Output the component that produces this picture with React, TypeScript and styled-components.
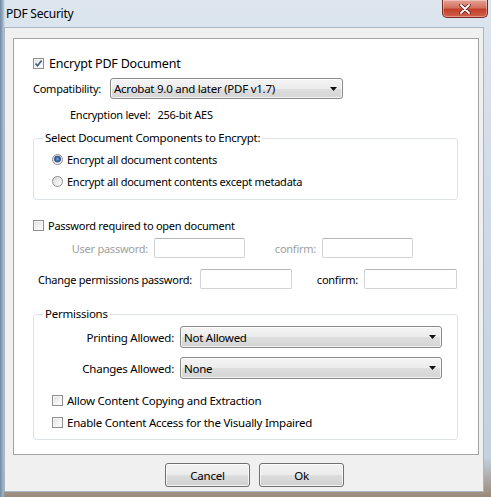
import styled, { createGlobalStyle } from "styled-components";

const GlobalStyle = createGlobalStyle`
  html, body {
    margin: 0;
    padding: 0;
  }
  body {
    font-family: "Noto Sans", "Liberation Sans", sans-serif;
    font-size: 11px;
    letter-spacing: -0.25px;
    color: #000;
  }
  * {
    box-sizing: border-box;
  }
`;

const CheckBox = ({ checked }: { checked?: boolean }) => (
  <Box>
    {checked && (
      <svg width="9" height="9" viewBox="0 0 9 9">
        <path d="M1.5 4.5 L3.6 6.8 L7.6 1.6" fill="none" stroke="#3b5a8f" strokeWidth="1.6" />
      </svg>
    )}
  </Box>
);

const Arrow = () => (
  <svg width="7" height="4" viewBox="0 0 7 4">
    <path d="M0 0 H7 L3.5 4 Z" fill="#111" />
  </svg>
);

const App = () => {
  return (
    <>
      <GlobalStyle />
      <Window>
        <TitleBar>
          <Title>PDF Security</Title>
          <CloseButton>
            <svg width="12" height="10" viewBox="0 0 12 10">
              <path d="M2 1 L10 9 M10 1 L2 9" stroke="#5a1a14" strokeWidth="3.4" strokeLinecap="round" />
              <path d="M2 1 L10 9 M10 1 L2 9" stroke="#fff" strokeWidth="1.8" strokeLinecap="round" />
            </svg>
          </CloseButton>
        </TitleBar>

        <Client>
          <Panel>
            <Row $top={0} $height={20}>
              <CheckBox checked />
              <BigLabel>Encrypt PDF Document</BigLabel>
            </Row>

            <Row $top={5} $height={21}>
              <Label $width={71}>Compatibility:</Label>
              <DropDown $width={233} $height={21}>
                <span>Acrobat 9.0 and later (PDF v1.7)</span>
                <Arrow />
              </DropDown>
            </Row>

            <Row $top={7} $height={16} $indent={37}>
              <span>Encryption level:</span>
              <Value>256-bit AES</Value>
            </Row>

            <Group $top={8} $height={70}>
              <Legend>Select Document Components to Encrypt:</Legend>
              <Row $top={3} $height={20}>
                <Radio $checked />
                <OptionText>Encrypt all document contents</OptionText>
              </Row>
              <Row $top={2} $height={20}>
                <Radio />
                <OptionText>Encrypt all document contents except metadata</OptionText>
              </Row>
            </Group>

            <Row $top={15} $height={20}>
              <CheckBox />
              <OptionText>Password required to open document</OptionText>
            </Row>

            <Row $top={3} $height={20}>
              <Label $width={115} $right $muted>User password:</Label>
              <TextField $width={91} />
              <Label $width={71} $right $muted>confirm:</Label>
              <TextField $width={91} />
            </Row>

            <Row $top={11} $height={20} $indent={5}>
              <Label $width={156}>Change permissions password:</Label>
              <TextField $width={92} />
              <Label $width={66} $right>confirm:</Label>
              <TextField $width={93} />
            </Row>

            <Group $top={17} $height={134}>
              <Legend>Permissions</Legend>
              <Row $top={4} $height={22}>
                <Label $width={122} $right $big>Printing Allowed:</Label>
                <DropDown $width={262} $height={22}>
                  <span>Not Allowed</span>
                  <Arrow />
                </DropDown>
              </Row>
              <Row $top={9} $height={22}>
                <Label $width={122} $right $big>Changes Allowed:</Label>
                <DropDown $width={262} $height={22}>
                  <span>None</span>
                  <Arrow />
                </DropDown>
              </Row>
              <Row $top={11} $height={20}>
                <CheckBox />
                <OptionText $big>Allow Content Copying and Extraction</OptionText>
              </Row>
              <Row $top={2} $height={20}>
                <CheckBox />
                <OptionText $big>Enable Content Access for the Visually Impaired</OptionText>
              </Row>
            </Group>
          </Panel>

          <Footer>
            <Button>Cancel</Button>
            <Button>Ok</Button>
          </Footer>
        </Client>
      </Window>
    </>
  );
};

const Window = styled.div`
  width: 491px;
  height: 497px;
  display: flex;
  flex-direction: column;
  overflow: hidden;
  background:
    linear-gradient(90deg, #6f88a3 0px, #9fb3c8 3px, transparent 5px),
    linear-gradient(180deg, #dde6ef 0%, #cfdbe8 40%, #c3d1e0 92%, #9a8878 100%);
`;

const TitleBar = styled.div`
  height: 27px;
  flex: none;
  display: flex;
  justify-content: space-between;
  align-items: flex-start;
  padding-left: 6px;
  padding-right: 3px;
`;

const Title = styled.div`
  margin-top: 6px;
  font-size: 12px;
  line-height: 16px;
  color: #000;
`;

const CloseButton = styled.div`
  width: 46px;
  height: 18px;
  display: flex;
  align-items: center;
  justify-content: center;
  border: 1px solid #7a2a22;
  border-top: none;
  border-radius: 0 0 5px 5px;
  background: linear-gradient(180deg, #e6a194 0%, #d2715f 45%, #c2402b 55%, #d2604a 100%);
  box-shadow: inset 0 0 0 1px rgba(255, 255, 255, 0.35);
`;

const Client = styled.div`
  flex: 1;
  margin: 0 7px 5px 4px;
  display: flex;
  flex-direction: column;
  background: #f0f0f0;
  border: 1px solid #a9b5c2;
  padding: 10px 4px 0 8px;
`;

const Panel = styled.div`
  height: 417px;
  flex: none;
  display: flex;
  flex-direction: column;
  background: #fff;
  border: 1px solid #a3a3a3;
  padding: 14px 20px 0 19px;
`;

const Row = styled.div<{ $top: number; $height: number; $indent?: number }>`
  display: flex;
  align-items: center;
  flex: none;
  height: ${({ $height }) => $height}px;
  margin-top: ${({ $top }) => $top}px;
  padding-left: ${({ $indent }) => $indent || 0}px;
  white-space: nowrap;
`;

const Box = styled.span`
  width: 11px;
  height: 11px;
  flex: none;
  display: flex;
  align-items: center;
  justify-content: center;
  border: 1px solid #8f8f8f;
  background: linear-gradient(135deg, #dcdcdc 0%, #f4f4f4 60%, #ffffff 100%);
  box-shadow: inset 0 0 0 1px #f6f6f6;
`;

const Radio = styled.span<{ $checked?: boolean }>`
  width: 11px;
  height: 11px;
  flex: none;
  border-radius: 50%;
  border: 1px solid #8f8f8f;
  background: ${({ $checked }) =>
    $checked
      ? "radial-gradient(circle at 50% 45%, #8fb0dc 0px, #2f5596 2.3px, #3a5f99 3.2px, #e8e8e8 3.7px, #f8f8f8 100%)"
      : "linear-gradient(135deg, #d8d8d8 0%, #f4f4f4 70%, #fff 100%)"};
`;

const BigLabel = styled.span`
  margin-left: 5px;
  font-size: 12.5px;
  letter-spacing: -0.2px;
`;

const OptionText = styled.span<{ $big?: boolean }>`
  margin-left: 4px;
  font-size: ${({ $big }) => ($big ? 11.5 : 11)}px;
`;

const Label = styled.span<{ $width?: number; $right?: boolean; $muted?: boolean; $big?: boolean }>`
  flex: none;
  width: ${({ $width }) => ($width ? `${$width}px` : "auto")};
  text-align: ${({ $right }) => ($right ? "right" : "left")};
  color: ${({ $muted }) => ($muted ? "#a0a0a0" : "#000")};
  font-size: ${({ $big }) => ($big ? 11.5 : 11)}px;
  margin-right: 6px;
`;

const Value = styled.span`
  margin-left: 7px;
`;

const DropDown = styled.div<{ $width: number; $height: number }>`
  width: ${({ $width }) => $width}px;
  height: ${({ $height }) => $height}px;
  flex: none;
  display: flex;
  align-items: center;
  justify-content: space-between;
  padding: 0 5px 0 3px;
  border: 1px solid #8a8a8a;
  border-radius: 3px;
  font-size: 11.5px;
  background: linear-gradient(180deg, #f4f4f4 0%, #ececec 50%, #dedede 52%, #d4d4d4 100%);
  box-shadow: inset 0 0 0 1px rgba(255, 255, 255, 0.7);
`;

const TextField = styled.div<{ $width: number }>`
  width: ${({ $width }) => $width}px;
  height: 20px;
  flex: none;
  background: #fff;
  border: 1px solid #d0d3d8;
  border-top-color: #b4b7bd;
  border-radius: 2px;
`;

const Group = styled.fieldset<{ $top: number; $height: number }>`
  margin: ${({ $top }) => $top}px 0 0 0;
  height: ${({ $height }) => $height}px;
  flex: none;
  width: 425px;
  padding: 0 0 0 18px;
  border: 1px solid #dde3e8;
  border-radius: 3px;
  min-width: 0;
`;

const Legend = styled.legend`
  margin-left: -9px;
  padding: 0 2px;
  line-height: 16px;
  font-size: 11.5px;
`;

const Footer = styled.div`
  flex: 1;
  display: flex;
  justify-content: center;
  align-items: flex-start;
  gap: 9px;
  padding-top: 8px;
  padding-left: 17px;
`;

const Button = styled.button`
  width: 85px;
  height: 24px;
  font-family: "Noto Sans", "Liberation Sans", sans-serif;
  font-size: 11.5px;
  letter-spacing: -0.2px;
  color: #000;
  border: 1px solid #707070;
  border-radius: 3px;
  background: linear-gradient(180deg, #f2f2f2 0%, #ebebeb 50%, #dddddd 52%, #cfcfcf 100%);
  box-shadow: inset 0 0 0 1px rgba(255, 255, 255, 0.75);
  padding: 0;
`;

export default App;
